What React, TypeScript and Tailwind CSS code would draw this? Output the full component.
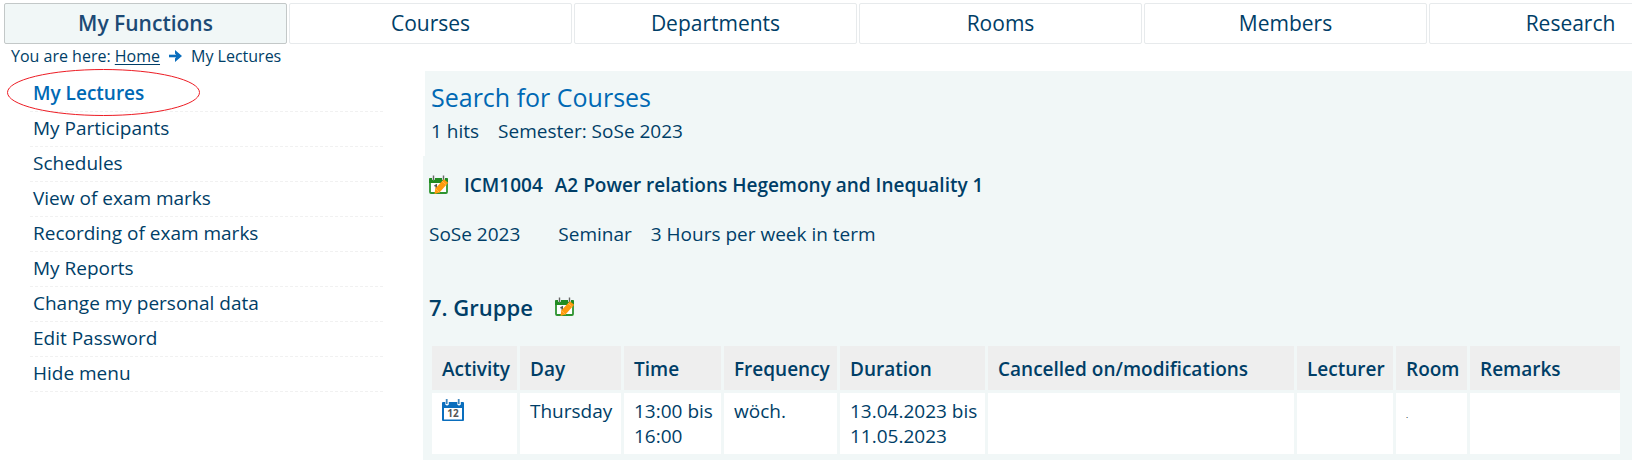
import type { ReactNode } from 'react'

const tabs = ['My Functions', 'Courses', 'Departments', 'Rooms', 'Members', 'Research']

const menu = [
  'My Lectures',
  'My Participants',
  'Schedules',
  'View of exam marks',
  'Recording of exam marks',
  'My Reports',
  'Change my personal data',
  'Edit Password',
  'Hide menu',
]

const columns = [
  { title: 'Activity', width: 'w-[85px]' },
  { title: 'Day', width: 'w-[101px]' },
  { title: 'Time', width: 'w-[97px]' },
  { title: 'Frequency', width: 'w-[113px]' },
  { title: 'Duration', width: 'w-[145px]' },
  { title: 'Cancelled on/modifications', width: '' },
  { title: 'Lecturer', width: 'w-[96px]' },
  { title: 'Room', width: 'w-[71px]' },
  { title: 'Remarks', width: 'w-[150px]' },
]

function EditIcon() {
  return (
    <svg className="shrink-0" width="20" height="20" viewBox="0 0 20 20" aria-hidden="true">
      <rect x="1" y="4" width="17" height="14" rx="1" fill="#fff" stroke="#2e9430" strokeWidth="1.800" />
      <path d="M1 3h17q1 0 1 1v4H0V4q0-1 1-1z" fill="#228b22" />
      <path d="M3 0h3v4.500q-1.500 1.500-3 0zM13 0h3v4.500q-1.500 1.500-3 0z" fill="#f1f7f7" />
      <path d="M4.500 0.500v4.500M14.500 0.500v4.500" stroke="#666" strokeWidth="1.400" />
      <path d="M5.500 11l1.800-1v4.500" fill="none" stroke="#555" strokeWidth="1.500" />
      <path d="M5.500 19l.8-5.500L14.800 4.200l4.400 3.600-8.700 9.700z" fill="#ff9a0c" />
      <path d="M13 6.200l4.300 3.700M6.300 13.500l4.200 4" stroke="#ffc36b" strokeWidth=".7" />
    </svg>
  )
}

function CalendarIcon() {
  return (
    <svg width="22" height="22" viewBox="0 0 22 22" aria-hidden="true">
      <path d="M0 4q0-1 1-1h20q1 0 1 1v17q0 1-1 1H1q-1 0-1-1z" fill="#0a6ebd" />
      <path d="M2 9h18v11.500H2z" fill="#fff" />
      <path d="M3.300 0h3.500v5.500q-1.750 2-3.500 0zM15.300 0h3.500v5.500q-1.750 2-3.500 0z" fill="#fff" />
      <path d="M4.700 0v5M16.700 0v5" stroke="#3f86bd" strokeWidth="1.800" />
      <text x="11" y="18" textAnchor="middle" fontSize="10" fontWeight="700" fill="#555" fontFamily="Open Sans">
        12
      </text>
    </svg>
  )
}

function Cell({ children }: { children?: ReactNode }) {
  return <td className="h-[61px] bg-white pt-[6px] pr-1 pb-1 pl-[10px] align-top leading-[25px]">{children}</td>
}

export default function App() {
  return (
    <div className="overflow-hidden bg-white font-['Open_Sans',sans-serif] text-[19px] text-[#003e67]">
      <nav className="flex gap-[2px] pt-[3px] pl-1">
        {tabs.map((tab, i) => (
          <a
            key={tab}
            href="#"
            className={
              i === 0
                ? 'h-[41px] w-[283px] shrink-0 rounded-xs border border-[#c3c8c8] bg-[#f1f7f7] text-center text-[21px] leading-[39px] font-semibold text-[#1c4a75]'
                : 'h-[41px] w-[283px] shrink-0 rounded-xs border border-[#e7eaec] text-center text-[21px] leading-[39px]'
            }
          >
            {tab}
          </a>
        ))}
      </nav>

      <div className="flex h-[27px] items-start pl-[11px] text-base leading-6">
        <span>
          You are here:{' '}
          <a href="#" className="underline underline-offset-2">
            Home
          </a>
        </span>
        <svg className="mx-[9px] mt-[5px]" width="13" height="14" viewBox="0 0 13 14" aria-hidden="true">
          <path d="M0 7h10" stroke="#0a6ebd" strokeWidth="2.600" />
          <path d="M6 1l7 6-7 6v-3.500l2-2.500-2-2.500z" fill="#0a6ebd" />
        </svg>
        <span>My Lectures</span>
      </div>

      <div className="flex">
        <aside className="relative w-[423px] shrink-0 pt-[6px] pr-10 pl-[30px]">
          <ul>
            {menu.map((item, i) => (
              <li key={item} className="h-[35px] border-b border-dashed border-[#f1f1f1] pl-[3px] leading-8">
                <a href="#" className={i === 0 ? 'font-semibold text-[#0069b4]' : ''}>
                  {item}
                </a>
              </li>
            ))}
          </ul>
          <svg className="pointer-events-none absolute -top-[3px] left-[6px]" width="195" height="50" viewBox="0 0 195 50" aria-hidden="true">
            <ellipse cx="97.500" cy="24.500" rx="96" ry="23" fill="none" stroke="#ed1c24" strokeWidth="1" />
          </svg>
        </aside>

        <main className="flex min-w-0 grow flex-col">
          <header className="ml-[2px] h-[85px] bg-[#f1f7f7] pt-2 pl-[6px]">
            <h1 className="text-[25px] leading-9 text-[#0069b4]">Search for Courses</h1>
            <p className="flex gap-[19px] leading-8">
              <span>1 hits</span>
              <span>Semester: SoSe 2023</span>
            </p>
          </header>

          <section className="bg-[#f1f7f7] pt-[14px] pb-[3px] pl-[6px]">
            <h2 className="flex h-[30px] items-center font-semibold">
              <EditIcon />
              <span className="ml-[15px]">ICM1004</span>
              <span className="ml-3">A2 Power relations Hegemony and Inequality 1</span>
            </h2>
            <p className="mt-[19px] flex h-[30px] items-center">
              <span>SoSe 2023</span>
              <span className="ml-[38px]">Seminar</span>
              <span className="ml-[19px]">3 Hours per week in term</span>
            </p>
            <h3 className="mt-[43px] flex h-[30px] items-center gap-[22px] text-[22px] font-semibold">
              7. Gruppe
              <EditIcon />
            </h3>

            <div className="pt-[21px] pr-[9px]">
              <table className="w-full table-fixed border-separate border-spacing-[3px]">
                <colgroup>
                  {columns.map((col) => (
                    <col key={col.title} className={col.width} />
                  ))}
                </colgroup>
                <thead>
                  <tr>
                    {columns.map((col) => (
                      <th key={col.title} className="h-[44px] bg-[#eee] pt-[3px] pr-1 pl-[10px] text-left font-semibold whitespace-nowrap">
                        {col.title}
                      </th>
                    ))}
                  </tr>
                </thead>
                <tbody>
                  <tr>
                    <Cell>
                      <a href="#" aria-label="Calendar" className="block">
                        <CalendarIcon />
                      </a>
                    </Cell>
                    <Cell>Thursday</Cell>
                    <Cell>13:00 bis 16:00</Cell>
                    <Cell>wöch.</Cell>
                    <Cell>13.04.2023 bis 11.05.2023</Cell>
                    <Cell />
                    <Cell />
                    <Cell>
                      <span className="text-[8px] text-black">.</span>
                    </Cell>
                    <Cell />
                  </tr>
                </tbody>
              </table>
            </div>
          </section>
        </main>
      </div>
    </div>
  )
}
